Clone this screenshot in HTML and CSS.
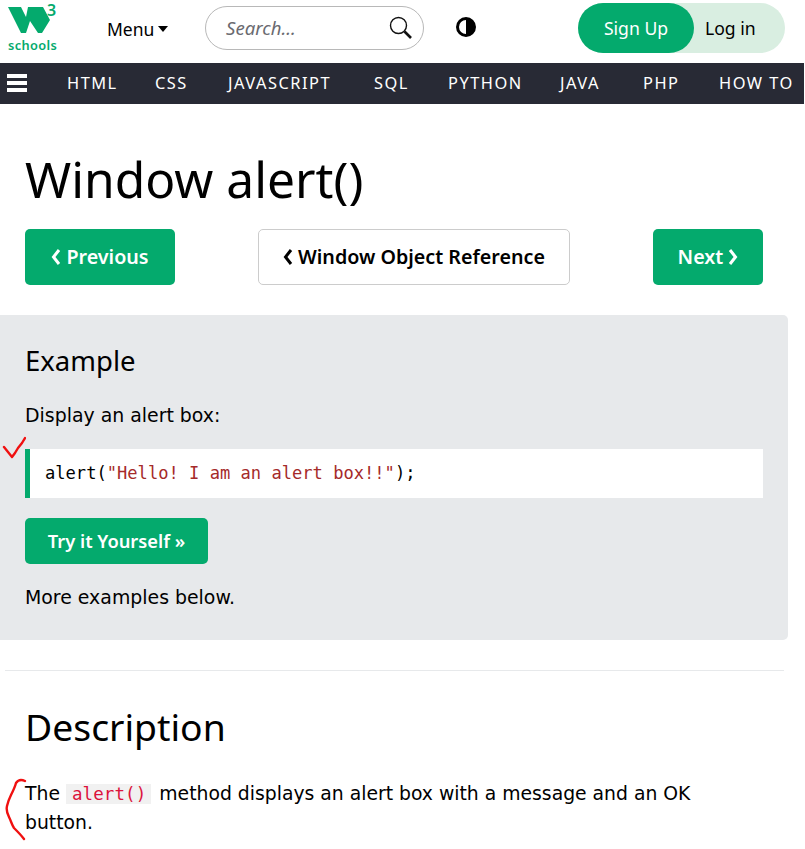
FILE: index.html
```html
<!DOCTYPE html>
<html lang="en">
<head>
<meta charset="utf-8">
<title>Window alert()</title>
<link rel="stylesheet" href="styles.css">
</head>
<body>
<div class="page">
  <header class="topbar">
    <a class="logo">
      <svg class="logo-mark" width="50" height="31" viewBox="0 0 50 31">
        <path class="logo-green" d="M0 4H13L18 14L20 4H35L42 17L34 30H30L22 18L18 30H13Z"/>
      </svg>
      <span class="logo-three">3</span>
      <span class="logo-word">schools</span>
    </a>
    <a class="menu">Menu<span class="caret"></span></a>
    <div class="search">
      <span class="search-text">Search...</span>
      <svg width="24" height="24" viewBox="0 0 24 24" class="search-icon">
        <circle cx="9.5" cy="9.5" r="8"/>
        <path d="M15.5 15.5L22 22" class="handle"/>
      </svg>
    </div>
    <svg class="contrast" width="20" height="20" viewBox="0 0 20 20">
      <circle cx="10" cy="10" r="8.5" class="ring"/>
      <path d="M10 1A9 9 0 0 1 10 19Z" class="half-dark"/>
    </svg>
    <div class="auth">
      <a class="signup">Sign Up</a>
      <a class="login">Log in</a>
    </div>
  </header>
  <nav class="navbar">
    <span class="burger"><i></i><i></i><i></i></span>
    <a>HTML</a><a>CSS</a><a>JAVASCRIPT</a><a>SQL</a><a>PYTHON</a><a>JAVA</a><a>PHP</a><a>HOW TO</a>
  </nav>
  <main class="content">
    <h1>Window alert()</h1>
    <div class="pager">
      <a class="btn btn-green"><svg class="chev" width="10" height="18" viewBox="0 0 10 18"><path d="M8 2L2.5 9L8 16"/></svg>Previous</a>
      <a class="btn btn-white"><svg class="chev" width="10" height="18" viewBox="0 0 10 18"><path d="M8 2L2.5 9L8 16"/></svg>Window Object Reference</a>
      <a class="btn btn-green">Next<svg class="chev" width="10" height="18" viewBox="0 0 10 18"><path d="M2 2L7.5 9L2 16"/></svg></a>
    </div>
  </main>
  <section class="example">
    <h2>Example</h2>
    <p class="ex-text">Display an alert box:</p>
    <div class="code">alert(<span class="str">"Hello! I am an alert box!!"</span>);</div>
    <a class="try">Try it Yourself »</a>
    <p class="ex-more">More examples below.</p>
  </section>
  <hr class="rule">
  <section class="desc">
    <h2 class="desc-title">Description</h2>
    <p class="desc-text">The <code class="inline">alert()</code> method displays an alert box with a message and an OK button.</p>
  </section>
</div>
<svg class="mark mark-check" width="26" height="24" viewBox="0 0 26 24">
  <path d="M4 11L8 16L12 21L15 17L18 12L22 7L25 2"/>
</svg>
<svg class="mark mark-brace" width="28" height="64" viewBox="0 0 28 64">
  <path d="M25 3C21 1 18 2 16 5C15 9 13 13 11 17C9 21 8 24 7 28C6 32 7 35 9 39C11 43 12 47 14 50C17 53 21 57 24 61"/>
</svg>
</body>
</html>
```
FILE: styles.css
```css
html, body { margin: 0; padding: 0; background: #fff; }
body { width: 805px; height: 849px; overflow: hidden; position: relative; font-family: "DejaVu Sans", sans-serif; color: #000; }
.page { width: 805px; }
.topbar { height: 63px; display: flex; align-items: flex-start; position: relative; }
.logo { width: 50px; margin: 3px 0 0 8px; display: flex; flex-direction: column; position: relative; }
.logo-mark { display: block; }
.logo-green { fill: #04aa6d; }
.logo-three { position: absolute; left: 39px; top: -3px; font: 600 16px/20px "Noto Sans", sans-serif; color: #04aa6d; }
.logo-word { font: 600 12.8px/14px "Noto Sans", sans-serif; color: #04aa6d; letter-spacing: .35px; margin-top: 4px; white-space: nowrap; }
.menu { font: 400 17.5px/24px "Noto Sans", sans-serif; margin: 17px 0 0 49px; width: 98px; display: flex; align-items: center; }
.caret { width: 0; height: 0; border: 5.5px solid transparent; border-top: 6px solid #000; border-bottom: 0; margin-left: 4px; }
.search { width: 219px; height: 44px; margin-top: 6px; box-sizing: border-box; border: 1px solid #b8b8b8; border-radius: 22px; display: flex; align-items: center; justify-content: space-between; padding: 0 10px 0 20px; }
.search-text { font: italic 400 18.6px/24px "Noto Sans", sans-serif; color: #6a6a70; margin-top: -1px; }
.search-icon { fill: none; stroke: #111; stroke-width: 1.4; }
.handle { stroke-width: 2.6; }
.contrast { margin: 17px 0 0 32px; }
.ring { fill: #fff; stroke: #000; stroke-width: 3; }
.half-dark { fill: #000; }
.auth { margin: 3px 0 0 102px; width: 207px; height: 50px; border-radius: 25px; background: #d9eee1; display: flex; font: 400 17.6px/50px "Noto Sans", sans-serif; }
.signup { width: 116px; border-radius: 25px; background: #04aa6d; color: #fff; text-align: center; }
.login { padding-left: 11px; }
.navbar { height: 41px; box-sizing: border-box; padding-bottom: 2px; background: #282a35; color: #fff; display: grid; grid-template-columns: 67px 88px 73px 146px 74px 112px 83px 76px 85px; align-items: center; font: 400 16.4px "Noto Sans", sans-serif; letter-spacing: 1.5px; width: 804px; overflow: hidden; }
.burger { width: 20px; margin-left: 7px; display: flex; flex-direction: column; gap: 3px; }
.burger i { display: block; height: 4px; background: #fff; }
.navbar a { white-space: nowrap; }
.content { padding: 0 42px 0 25px; }
h1 { font: 400 49.7px/70px "Noto Sans", sans-serif; margin: 40px 0 0; }
.pager { display: flex; justify-content: space-between; margin-top: 15px; }
.btn { height: 56px; box-sizing: border-box; border-radius: 5px; display: flex; align-items: center; justify-content: center; font: 600 19.7px/52px "Noto Sans", sans-serif; gap: 5px; padding-bottom: 1px; }
.chev { fill: none; stroke: currentColor; stroke-width: 3; }
.btn-green { background: #04aa6d; color: #fff; }
.pager .btn-green:first-child { width: 150px; }
.pager .btn-green:last-child { width: 110px; }
.btn-white { width: 312px; border: 1px solid #ccc; }
.example { width: 788px; height: 325px; margin-top: 30px; box-sizing: border-box; padding: 27px 25px 0; background: #e7e9eb; border-radius: 0 5px 5px 0; }
.example h2 { font: 400 27.5px/38px "Noto Sans", sans-serif; margin: 0; }
.ex-text { font-size: 18.9px; line-height: 26px; margin: 22px 0 0; }
.code { margin-top: 21px; height: 49px; box-sizing: border-box; background: #fff; border-left: 5px solid #04aa6d; padding-left: 15px; font: 17.1px/49px "DejaVu Sans Mono", monospace; }
.str { color: #a52a2a; }
.try { display: block; width: 183px; height: 46px; margin-top: 20px; border-radius: 5px; background: #04aa6d; color: #fff; text-align: center; font: 600 18.3px/46px "Noto Sans", sans-serif; }
.ex-more { font-size: 18.9px; line-height: 26px; margin: 20px 0 0; }
.rule { width: 779px; margin: 30px 0 0 5px; border: 0; border-top: 1px solid #e7e9eb; }
.desc { padding: 0 80px 0 25px; }
.desc-title { font: 400 37.3px/52px "Noto Sans", sans-serif; margin: 30px 0 0; }
.desc-text { font-size: 18.8px; line-height: 29px; margin: 26px 0 0; }
.inline { font: 17.5px/24px "DejaVu Sans Mono", monospace; color: #dc143c; background: #f1f1f1; padding: 0 5px 0 6px; margin-right: 2px; letter-spacing: .1px; }
.mark { position: absolute; fill: none; stroke: #f01010; stroke-width: 2.4; stroke-linecap: round; stroke-linejoin: round; }
.mark-check { left: 0; top: 436px; }
.mark-brace { left: 0; top: 778px; }
```
